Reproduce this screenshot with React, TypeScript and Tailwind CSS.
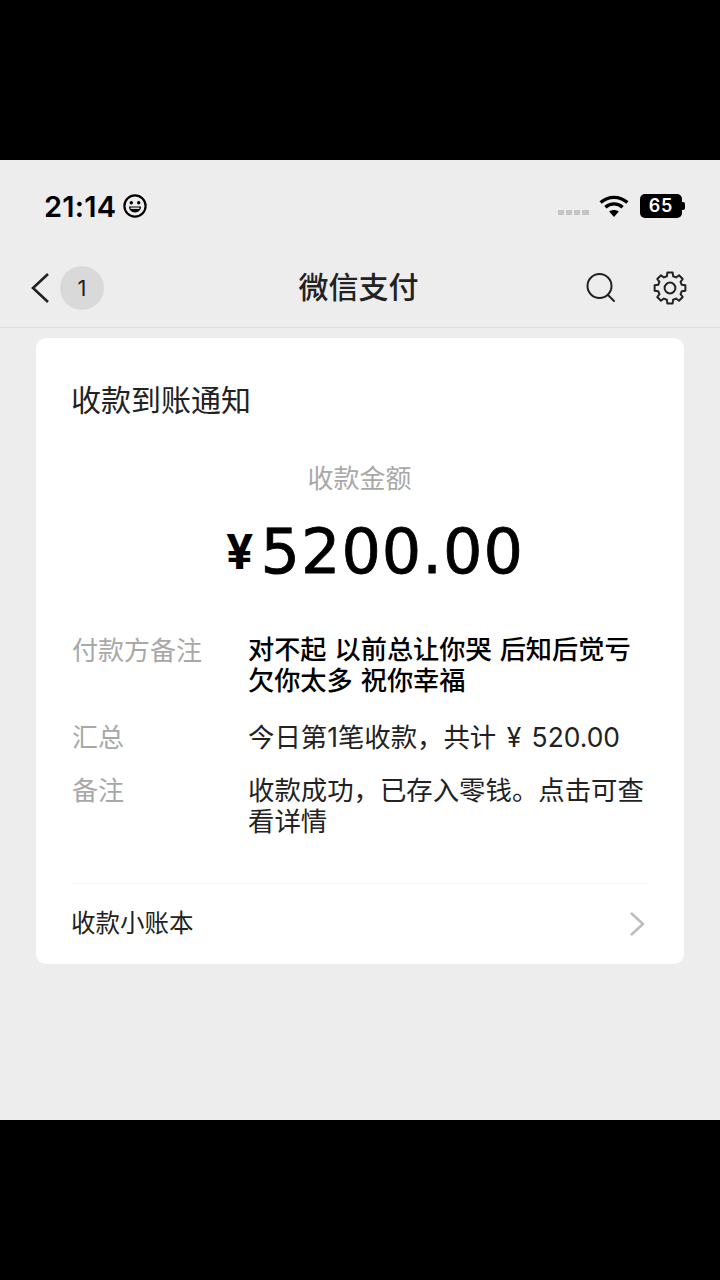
const cjk = "font-['Inter','Noto_Sans_CJK_SC',sans-serif]";

const rows = [
  { label: '付款方备注', value: '对不起 以前总让你哭 后知后觉亏欠你太多 祝你幸福', dark: true },
  { label: '汇总', value: '今日第1笔收款，共计 ¥ 520.00', dark: false },
  { label: '备注', value: '收款成功，已存入零钱。点击可查看详情', dark: false },
];

// 8-tooth cog outline
function gearPath() {
  const pts: string[] = [];
  for (let i = 0; i < 8; i++) {
    const a = (i * Math.PI) / 4 - Math.PI / 2;
    const at = (r: number, d: number) => `${(17 + r * Math.cos(a + d)).toFixed(2)} ${(17 + r * Math.sin(a + d)).toFixed(2)}`;
    pts.push(`${i === 0 ? 'M' : 'L'}${at(12.2, -0.26)}`, `L${at(15.6, -0.17)}`, `L${at(15.6, 0.17)}`, `L${at(12.2, 0.26)}`);
  }
  return pts.join(' ') + 'Z';
}

function StatusBar() {
  return (
    <div className="h-[90px] flex items-start justify-between pl-[44px] pr-[35px] pt-[29px]">
      <div className="flex items-center gap-[7px] h-[34px]">
        <span className="text-[29px] font-semibold leading-none text-black tracking-[0.2px]">21:14</span>
        <svg width="24" height="24" viewBox="0 0 24 24" fill="none" stroke="#000" strokeWidth="2.2">
          <circle cx="12" cy="12" r="10.6" />
          <circle cx="8.3" cy="8.8" r="1.7" fill="#000" stroke="none" />
          <circle cx="15.7" cy="8.8" r="1.7" fill="#000" stroke="none" />
          <path d="M6 12.6h12c0 3.6-2.6 5.8-6 5.8s-6-2.2-6-5.8z" fill="#000" stroke="none" />
          <path d="M7.6 14.2h8.8" stroke="#fff" strokeWidth="1.3" />
        </svg>
      </div>
      <div className="flex items-center h-[34px]">
        <div className="flex items-center gap-[2px] mt-[13px] mr-[10px]">
          <span className="w-[6px] h-[5px] bg-[#c4c4c4]" />
          <span className="w-[6px] h-[5px] bg-[#c4c4c4]" />
          <span className="w-[6px] h-[5px] bg-[#c4c4c4]" />
          <span className="w-[7px] h-[5px] bg-[#c4c4c4]" />
        </div>
        <svg width="30" height="22" viewBox="0 0 30 22" className="mr-[11px]" fill="none" stroke="#000" strokeWidth="3.4">
          <path d="M1.6 7.6C9.4 .6 20.6 .6 28.4 7.6" />
          <path d="M6.4 12.2c5-4.4 12.2-4.4 17.2 0" />
          <path d="M15 22l-4.8-5.6c2.9-2 6.7-2 9.6 0z" fill="#000" stroke="none" />
        </svg>
        <div className="flex items-center">
          <div className="w-[42px] h-[24px] rounded-[5px] bg-black flex items-center justify-center text-white text-[18px] font-semibold leading-none tracking-[0.8px]">
            65
          </div>
          <span className="w-[3px] h-[8px] bg-black rounded-r-[2px]" />
        </div>
      </div>
    </div>
  );
}

function NavBar() {
  return (
    <div className="relative h-[78px] flex items-center justify-between pl-[30px] pr-[33px] border-b border-[#dcdcdc] pb-[2px]">
      <div className="flex items-center gap-[10px]">
        <svg width="20" height="32" viewBox="0 0 20 32" fill="none" stroke="#222" strokeWidth="2.6">
          <path d="M18 2L3 16l15 14" />
        </svg>
        <div className="w-[44px] h-[44px] rounded-full bg-[#d9d9d9] flex items-center justify-center text-[22px] text-[#222] leading-none">1</div>
      </div>
      <div className="absolute inset-x-0 top-[17px] pr-[3px] text-center text-[30px] leading-[40px] font-medium text-[#222]">微信支付</div>
      <div className="flex items-center gap-[37px]">
        <svg width="30" height="32" viewBox="0 0 30 32" fill="none" stroke="#222" strokeWidth="2">
          <circle cx="13.5" cy="14" r="12" />
          <path d="M22 23l6 6" strokeLinecap="round" />
        </svg>
        <svg width="34" height="34" viewBox="0 0 34 34" fill="none" stroke="#222" strokeWidth="2" strokeLinejoin="round">
          <path d={gearPath()} />
          <circle cx="17" cy="17" r="5.4" />
        </svg>
      </div>
    </div>
  );
}

export default function App() {
  return (
    <div className={`w-[720px] h-[1280px] bg-black py-[160px] ${cjk}`}>
      <div className="h-[960px] bg-[#ededed]">
        <StatusBar />
        <NavBar />
        <div className="mx-[36px] mt-[10px] h-[626px] bg-white rounded-[10px] px-[36px] pt-[42px]">
          <div className="-ml-[1px] text-[30px] leading-[40px] text-[#222]">收款到账通知</div>
          <div className="mt-[39px] -ml-[1px] text-center text-[26px] leading-[40px] text-[#a8a8a8]">收款金额</div>
          <div className="mt-[22px] pl-[30px] flex items-center justify-center text-black leading-none">
            <span className="text-[48px] font-bold mr-[7px]">¥</span>
            <span className="text-[62px] tracking-[1px] font-['DejaVu_Sans',sans-serif] [-webkit-text-stroke:0.8px_#000]">5200.00</span>
          </div>
          <div className="mt-[51px] flex flex-col gap-[22px] text-[26px] leading-[31px]">
            {rows.map((r, i) => (
              <div key={r.label} className={i === 0 ? 'flex pb-[4px]' : 'flex'}>
                <div className={i === 0 ? 'w-[176px] pt-[1px] shrink-0 text-[#a8a8a8]' : 'w-[176px] shrink-0 text-[#a8a8a8]'}>{r.label}</div>
                <div className={r.dark ? 'flex-1 text-[26.2px] [word-spacing:1px] text-black font-medium' : 'flex-1 text-[26.4px] [word-spacing:3px] text-[#222]'}>{r.value}</div>
              </div>
            ))}
          </div>
          <div className="mt-[46px] border-t border-[#f4f4f4] h-[80px] flex items-center justify-between">
            <span className="-ml-[1px] text-[24.5px] text-[#222]">收款小账本</span>
            <svg width="16" height="26" viewBox="0 0 16 26" fill="none" stroke="#bbb" strokeWidth="2.4" className="mr-[3px]">
              <path d="M2 2l12 11L2 24" />
            </svg>
          </div>
        </div>
      </div>
    </div>
  );
}
